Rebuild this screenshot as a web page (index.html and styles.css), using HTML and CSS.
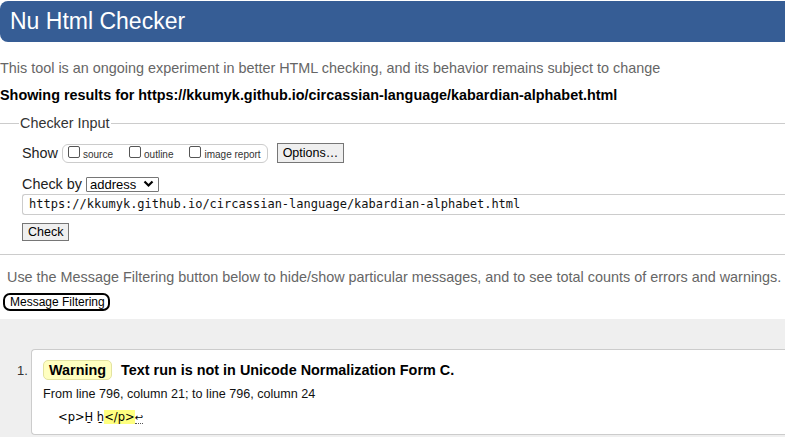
FILE: index.html
```html
<!DOCTYPE html>
<html lang="en">
<head>
<meta charset="utf-8">
<title>Nu Html Checker</title>
<link rel="stylesheet" href="styles.css">
</head>
<body>
<h1 class="title">Nu Html Checker</h1>
<p class="intro">This tool is an ongoing experiment in better HTML checking, and its behavior remains subject to change</p>
<p class="showing">Showing results for https://kkumyk.github.io/circassian-language/kabardian-alphabet.html</p>
<fieldset class="input-box">
  <legend class="legend">Checker Input</legend>
  <div class="row show-row">
    <span class="label">Show</span>
    <span class="opts">
      <label class="opt"><span class="cb"></span>source</label>
      <label class="opt"><span class="cb"></span>outline</label>
      <label class="opt"><span class="cb"></span>image report</label>
    </span>
    <span class="btn options">Options…</span>
  </div>
  <div class="row by-row">
    <span class="label">Check by</span>
    <span class="select">address<svg class="chev" width="11" height="8" viewBox="0 0 11 8"><path d="M1.5 1.5 L5.5 5.5 L9.5 1.5" fill="none" stroke="#000" stroke-width="2.2"/></svg></span>
  </div>
  <div class="url">https://kkumyk.github.io/circassian-language/kabardian-alphabet.html</div>
  <span class="btn check">Check</span>
</fieldset>
<p class="filter-note">Use the Message Filtering button below to hide/show particular messages, and to see total counts of errors and warnings.</p>
<div class="filter-wrap"><span class="filter-btn">Message Filtering</span></div>
<div class="results">
  <ol class="msgs">
    <li class="msg">
      <span class="num">1.</span>
      <div class="card">
        <p class="msg-head"><span class="badge">Warning</span><span class="msg-text">Text run is not in Unicode Normalization Form C.</span></p>
        <p class="loc">From line 796, column 21; to line 796, column 24</p>
        <p class="extract"><code>&lt;p&gt;H̱ ẖ<b class="hl">&lt;/p&gt;</b><span class="lf">↩</span></code></p>
      </div>
    </li>
  </ol>
</div>
</body>
</html>
```
FILE: styles.css
```css
html, body {
  margin: 0;
  padding: 0;
  background: #fff;
  overflow: hidden;
}
body {
  font-family: "Liberation Sans", Arial, sans-serif;
  color: #000;
  width: 785px;
  height: 437px;
}
.title {
  margin: 1px -20px 0 0;
  height: 41px;
  box-sizing: border-box;
  background: #365d95;
  color: #fff;
  font-weight: normal;
  font-size: 23px;
  line-height: 41px;
  padding: 0 0 0 10px;
  border-radius: 8px;
}
.intro {
  margin: 17px 0 0 0;
  font-size: 14.4px;
  line-height: 18px;
  color: #666;
}
.showing {
  margin: 9px 0 0 0;
  font-size: 14.4px;
  line-height: 18px;
  font-weight: bold;
}
.input-box {
  margin: 11px -5px 0 0;
  padding: 0 0 13px 22px;
  border: 0;
  border-top: 1px solid #ccc;
  border-bottom: 1px solid #ccc;
}
.legend {
  margin-left: -3px;
  padding: 0 1px;
  font-size: 14.4px;
  color: #333;
}
.row {
  display: flex;
  align-items: center;
}
.show-row {
  margin-top: 12px;
  height: 20px;
}
.label {
  font-size: 14.4px;
  color: #222;
}
.opts {
  display: inline-flex;
  align-items: center;
  margin-left: 4px;
  height: 17px;
  border: 1px solid #ccc;
  border-radius: 6px;
  padding: 0 6px 0 5px;
  gap: 16px;
}
.opt {
  display: inline-flex;
  align-items: center;
  font-size: 10px;
  color: #333;
  position: relative;
  top: 1px;
}
.cb {
  display: inline-block;
  width: 12px;
  height: 12px;
  border: 1px solid #555;
  border-radius: 2px;
  margin-right: 3px;
  position: relative;
  top: -2px;
  box-sizing: border-box;
}
.btn {
  display: inline-block;
  background: #efefef;
  border: 1px solid #767676;
  font-size: 12.5px;
  color: #000;
  padding: 0 5px;
  line-height: 16px;
}
.options {
  margin-left: 9px;
  padding: 1px 5px;
}
.by-row {
  margin-top: 12px;
  height: 18px;
}
.select {
  display: inline-flex;
  align-items: center;
  justify-content: space-between;
  margin-left: 4px;
  width: 73px;
  height: 15px;
  box-sizing: border-box;
  border: 1px solid #767676;
  border-radius: 1px;
  font-size: 13px;
  padding: 0 4px 0 3px;
}
.url {
  margin-top: 1px;
  height: 21px;
  box-sizing: border-box;
  border: 1px solid #ccc;
  border-right: 0;
  border-radius: 3px 0 0 3px;
  font-family: "DejaVu Sans Mono", monospace;
  font-size: 12px;
  line-height: 19px;
  padding-left: 6px;
  color: #111;
}
.check {
  margin-top: 8px;
  padding: 0 5px;
  line-height: 16px;
}
.filter-note {
  margin: 13px 0 0 7px;
  font-size: 14.4px;
  line-height: 18px;
  color: #666;
  white-space: nowrap;
}
.filter-wrap {
  margin-top: 6px;
  padding-left: 3px;
  height: 27px;
}
.filter-btn {
  display: inline-block;
  border: 2px solid #000;
  border-radius: 7px;
  font-size: 12px;
  line-height: 14px;
  padding: 0 3px 0 5px;
  background: #fff;
}
.results {
  background: #efefef;
  padding-top: 30px;
  height: 130px;
}
.msgs {
  list-style: none;
  margin: 0;
  padding: 0;
}
.msg {
  display: flex;
  align-items: flex-start;
}
.num {
  width: 31px;
  box-sizing: border-box;
  padding-left: 17px;
  padding-top: 14px;
  font-size: 13px;
  color: #333;
}
.card {
  flex: 1;
  background: #fff;
  border: 1px solid #ccc;
  border-right: 0;
  border-radius: 4px 0 0 4px;
  padding: 10px 0 6px 11px;
  height: 86px;
  box-sizing: border-box;
}
.msg-head {
  margin: 0;
  display: flex;
  align-items: center;
}
.badge {
  display: inline-block;
  background: #ffffc0;
  border: 1px solid #e3e3a0;
  border-radius: 5px;
  font-weight: bold;
  font-size: 14.4px;
  line-height: 18px;
  padding: 0 5px;
}
.msg-text {
  margin-left: 9px;
  font-weight: bold;
  font-size: 14.4px;
}
.loc {
  margin: 6px 0 0 0;
  font-size: 12.6px;
  line-height: 16px;
  color: #111;
}
.extract {
  margin: 7px 0 0 15px;
  font-size: 13px;
  line-height: 16px;
}
.extract code {
  font-family: "DejaVu Sans", sans-serif;
  font-size: 11.5px;
}
.hl {
  font-weight: normal;
  background: #ffff80;
}
.lf {
  border-bottom: 1px dotted #555;
  font-size: 10px;
}
```
